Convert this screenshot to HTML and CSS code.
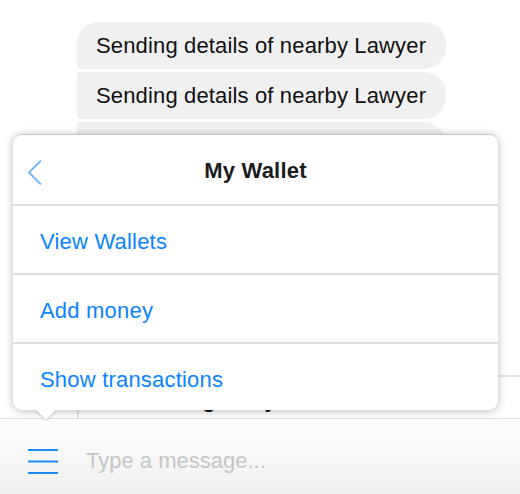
FILE: index.html
```html
<!DOCTYPE html>
<html>
<head>
<meta charset="utf-8">
<link rel="stylesheet" href="styles.css">
</head>
<body>
<div class="app">
  <div class="chat">
    <div class="messages">
      <div class="bubble first">Sending details of nearby Lawyer</div>
      <div class="bubble mid">Sending details of nearby Lawyer</div>
      <div class="bubble mid">Sending details of nearby Lawyer</div>
      <div class="bubble mid">Sending details of nearby Lawyer</div>
      <div class="bubble mid">Sending details of nearby Lawyer</div>
      <div class="bubble mid">Sending details of nearby Lawyer</div>
      <div class="bubble mid">Sending details of nearby Lawyer</div>
      <div class="card"><span class="card-title">Showing Lawyers</span></div>
    </div>
  </div>
  <div class="inputbar">
    <svg class="menu-icon" width="30" height="26" viewBox="0 0 30 26">
      <rect x="0" y="0" width="30" height="2" fill="#1a8af5"/>
      <rect x="0" y="11.5" width="30" height="2" fill="#1a8af5"/>
      <rect x="0" y="23" width="30" height="2" fill="#1a8af5"/>
    </svg>
    <span class="placeholder">Type a message...</span>
  </div>

  <div class="popover">
    <div class="pop-header">
      <svg class="back" width="16" height="28" viewBox="0 0 16 28">
        <polyline points="14,1.5 2,13.5 14,25.5" fill="none" stroke="#7ab6f4" stroke-width="2"/>
      </svg>
      <span class="pop-title">My Wallet</span>
    </div>
    <div class="pop-row">View Wallets</div>
    <div class="pop-row">Add money</div>
    <div class="pop-row last">Show transactions</div>
    <div class="pop-arrow"></div>
  </div>
</div>
</body>
</html>
```
FILE: styles.css
```css
* { box-sizing: border-box; }
html, body {
  margin: 0;
  padding: 0;
  background: #ffffff;
  font-family: "Liberation Sans", Arial, sans-serif;
}
.app {
  position: relative;
  width: 520px;
  height: 494px;
  display: flex;
  flex-direction: column;
  overflow: hidden;
}
.chat {
  height: 419px;
  overflow: hidden;
  border-bottom: 1px solid #dedede;
}
.messages {
  display: flex;
  flex-direction: column;
  align-items: flex-start;
  gap: 3px;
  padding: 22px 0 0 77px;
}
.bubble {
  background: #f0f0f0;
  color: #111;
  font-size: 22px;
  letter-spacing: 0.15px;
  line-height: 24px;
  padding: 12px 20px 11px 19px;
  border-radius: 3px 22px 22px 3px;
}
.bubble.first { border-radius: 22px 22px 22px 3px; }
.card {
  margin-top: 3px;
  width: 460px;
  height: 100px;
  border: 2px solid #e2e2e2;
  border-right: none;
  padding: 10px 0 0 45px;
  font-size: 22px;
  font-weight: bold;
  color: #111;
}
.inputbar {
  flex: 1;
  display: flex;
  align-items: center;
  gap: 28px;
  padding: 8px 0 0 28px;
  background: linear-gradient(#fefefe, #f0f0f0);
}
.menu-icon { display: block; margin-top: 2px; }
.placeholder {
  font-size: 22px;
  color: #c6c6c6;
  margin-top: 1px;
}
.popover {
  position: absolute;
  z-index: 1;
  left: 13px;
  top: 134px;
  width: 485px;
  height: 276px;
  background: #fff;
  border-radius: 9px;
  border-top: 1px solid #c8c8cc;
  box-shadow: 0 1px 8px rgba(0,0,0,0.28);
  display: flex;
  flex-direction: column;
}
.pop-header {
  position: relative;
  height: 71px;
  border-bottom: 2px solid #dcdce0;
  display: flex;
  align-items: center;
  justify-content: center;
}
.back {
  position: absolute;
  left: 14px;
  top: 24px;
}
.pop-title {
  font-size: 22px;
  font-weight: bold;
  letter-spacing: 0.2px;
  color: #1c1c1e;
  margin-top: 3px;
}
.pop-row {
  height: 69px;
  border-bottom: 2px solid #dcdce0;
  display: flex;
  align-items: center;
  padding: 5px 0 0 27px;
  font-size: 22px;
  letter-spacing: 0.2px;
  color: #0a84ff;
}
.pop-row.last {
  border-bottom: none;
  flex: 1;
  height: auto;
  padding-top: 6px;
}
.pop-arrow {
  position: absolute;
  left: 26px;
  bottom: -7px;
  width: 14px;
  height: 14px;
  background: #fff;
  transform: rotate(45deg);
  box-shadow: 1px 1px 2px rgba(0,0,0,0.2);
  z-index: -1;
}
```
